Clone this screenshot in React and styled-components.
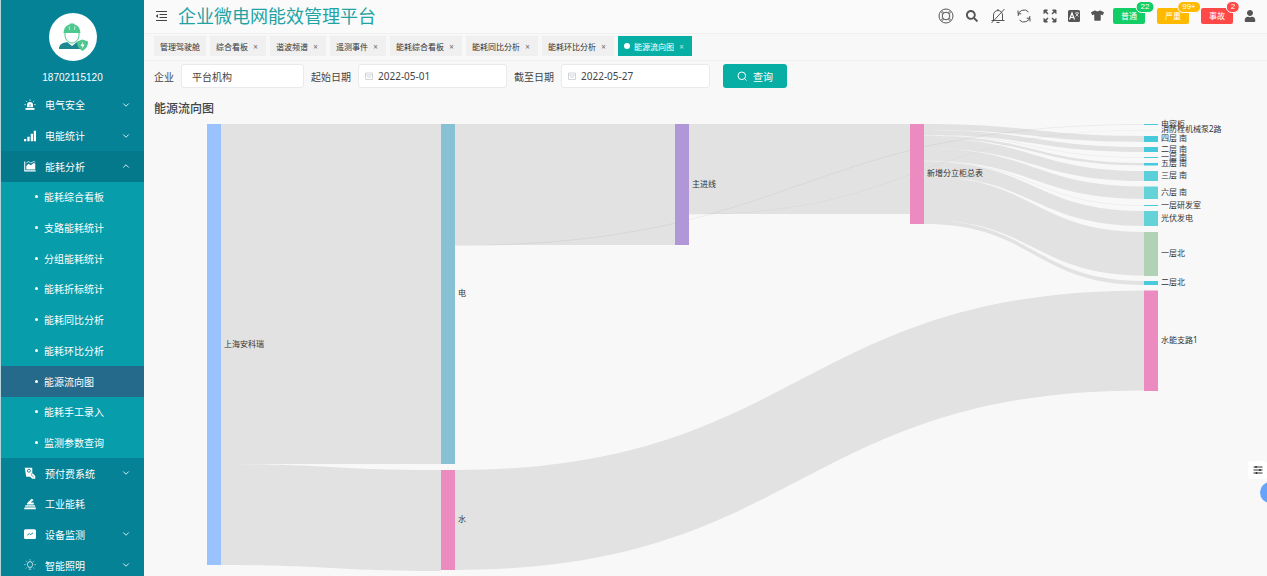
import React from 'react'
import styled, { createGlobalStyle } from 'styled-components'
import { FaSearch, FaTshirt, FaUser } from 'react-icons/fa'
import { ChevronDown, ChevronUp } from 'lucide-react'

const GlobalStyle = createGlobalStyle`
  * {
    box-sizing: border-box;
  }
  body {
    margin: 0;
    background: #f8f8f8;
    color: #444;
    font-family: 'Noto Sans', 'Noto Sans CJK SC', sans-serif;
    font-size: 10px;
  }
  button, input {
    font: inherit;
    color: inherit;
  }
`

/* ---------- data ---------- */

const menu = [
  { text: '电气安全', icon: 'alarm', arrow: 'down' },
  { text: '电能统计', icon: 'bars', arrow: 'down' },
  { text: '能耗分析', icon: 'area', arrow: 'up', open: true },
  { text: '能耗综合看板', sub: true },
  { text: '支路能耗统计', sub: true },
  { text: '分组能耗统计', sub: true },
  { text: '能耗折标统计', sub: true },
  { text: '能耗同比分析', sub: true },
  { text: '能耗环比分析', sub: true },
  { text: '能源流向图', sub: true, active: true },
  { text: '能耗手工录入', sub: true },
  { text: '监测参数查询', sub: true },
  { text: '预付费系统', icon: 'pay', arrow: 'down' },
  { text: '工业能耗', icon: 'factory' },
  { text: '设备监测', icon: 'monitor', arrow: 'down' },
  { text: '智能照明', icon: 'bulb', arrow: 'down' }
]

const tabs = [
  '管理驾驶舱', '综合看板', '谐波频谱', '遥测事件',
  '能耗综合看板', '能耗同比分析', '能耗环比分析', '能源流向图'
]

const alarms = [
  { text: '普通', count: '22', color: '#13ce66' },
  { text: '严重', count: '99+', color: '#ffba00' },
  { text: '事故', count: '2', color: '#ff4949' }
]

const columns = [63, 297, 531, 766, 1000]
const NODE_WIDTH = 14

const nodes = {
  root: { name: '上海安科瑞', col: 0, y: 6, h: 441, color: '#9ac2ff' },
  power: { name: '电', col: 1, y: 6, h: 340, color: '#88c1d4' },
  water: { name: '水', col: 1, y: 352, h: 100, color: '#ec8bc0' },
  main: { name: '主进线', col: 2, y: 6, h: 121, color: '#b098d8' },
  cabinet: { name: '新增分立柜总表', col: 3, y: 6, h: 100, color: '#ec8bc0' },
  capacitor: { name: '电容柜', col: 4, y: 6, h: 1, color: '#47cadb' },
  pump: { name: '消防栓机械泵2路', col: 4, y: 12, h: 0.3, color: '#c9edf1' },
  south4: { name: '四层 南', col: 4, y: 18, h: 6, color: '#47cadb' },
  south2: { name: '二层 南', col: 4, y: 29, h: 5, color: '#47cadb' },
  south1: { name: '一层 南', col: 4, y: 39, h: 1, color: '#47cadb' },
  south5: { name: '五层 南', col: 4, y: 45, h: 2.5, color: '#47cadb' },
  south3: { name: '三层 南', col: 4, y: 53, h: 10, color: '#5ad0da' },
  south6: { name: '六层 南', col: 4, y: 68.5, h: 12.5, color: '#63d3d8' },
  lab: { name: '一层研发室', col: 4, y: 87, h: 1, color: '#47cadb' },
  solar: { name: '光伏发电', col: 4, y: 93, h: 15, color: '#63d3d8' },
  north1: { name: '一层北', col: 4, y: 114, h: 44, color: '#b1d2b5' },
  north2: { name: '二层北', col: 4, y: 163, h: 4, color: '#47cadb' },
  waterBranch: { name: '水能支路1', col: 4, y: 172.5, h: 100.5, color: '#ec8bc0' }
}

const links = [
  ['root', 'power', 340],
  ['root', 'water', 101],
  ['power', 'main', 121],
  ['power', 'capacitor', 1],
  ['main', 'cabinet', 90],
  ['main', 'pump', 0.5],
  ['cabinet', 'south4', 6],
  ['cabinet', 'south2', 5],
  ['cabinet', 'south1', 0.8],
  ['cabinet', 'south5', 2.5],
  ['cabinet', 'south3', 10],
  ['cabinet', 'south6', 12.5],
  ['cabinet', 'lab', 0.8],
  ['cabinet', 'solar', 15],
  ['cabinet', 'north1', 43.5],
  ['cabinet', 'north2', 4],
  ['water', 'waterBranch', 100]
]

// stacks the links of each source from its top edge and returns the ribbons
const getRibbons = () => {
  const used = {}
  return links.map(([from, to, size]) => {
    const a = nodes[from]
    const b = nodes[to]
    const offset = used[from] || 0
    used[from] = offset + size
    const x1 = columns[a.col] + NODE_WIDTH
    const x2 = columns[b.col]
    const mid = (x1 + x2) / 2
    const y1 = a.y + offset
    const y2 = b.y
    return {
      id: `${from}-${to}`,
      thin: size <= 1,
      d: `M${x1} ${y1}C${mid} ${y1} ${mid} ${y2} ${x2} ${y2}V${y2 + size}` +
        `C${mid} ${y2 + size} ${mid} ${y1 + size} ${x1} ${y1 + size}Z`
    }
  })
}

/* ---------- icons ---------- */

const MenuIcon = ({ name }) => {
  const icons = {
    alarm: <>
      <path d='M4 11V8a4 4 0 0 1 8 0v3z' fill='currentColor' />
      <path d='M2 12h12v2.5H2z' fill='currentColor' />
      <path d='M8 .5v2M2.5 2.5l1.3 1.3M13.5 2.5l-1.3 1.3M.5 7.5h2M13.5 7.5h2' stroke='currentColor' />
      <path d='M8 7v3' stroke='#068297' />
    </>,
    bars: <path d='M0 12h3v3H0zM4.500 9h3v6h-3zM9 5h3v10H9zM13 1h3v14h-3z' fill='currentColor' />,
    area: <>
      <path d='M1 2v12.500h14.500' fill='none' stroke='currentColor' strokeWidth='1.400' />
      <path d='M3 12.500V8l3-3 3 2 4-3 2 1v7.500z' fill='currentColor' />
      <path d='M3 4l3-2 3 2 4-2 2 1' fill='none' stroke='currentColor' />
    </>,
    pay: <>
      <path d='M1 1h10v7l4 4v3.500h-4L8 13H3z' fill='currentColor' />
      <circle cx='6.500' cy='5' r='2' fill='none' stroke='#068297' strokeWidth='1.200' />
      <path d='M11 8l-1.500 2.500 3.500 3' fill='none' stroke='#068297' strokeWidth='.8' />
    </>,
    factory: <>
      <path d='M4 7l6-6 3 1.500L8.500 6H13v2.500H4z' fill='currentColor' />
      <path d='M2 9.500h12.500l1.500 5.500H0z' fill='currentColor' />
      <path d='M1 12h14' stroke='#068297' />
    </>,
    monitor: <>
      <rect x='0' y='1.500' width='16' height='13' rx='2' fill='currentColor' />
      <path d='M4.500 9.500l2.500-2 1.500 1.500L12 6.500' fill='none' stroke='#068297' strokeWidth='1.300' />
    </>,
    bulb: <>
      <path d='M6 11c0-1-1.500-2-1.500-4a3.500 3.500 0 0 1 7 0c0 2-1.500 3-1.500 4zM6.500 13.500h3' fill='none' stroke='currentColor' />
      <path d='M8 .5v1.500M2.500 2.500l1 1M13.500 2.500l-1 1M.5 7.500H2M14 7.500h1.500M2.500 12.500l1-1M13.500 12.500l-1-1' stroke='currentColor' />
    </>
  }
  return <svg width='12' height='12' viewBox='0 0 16 16'>{icons[name]}</svg>
}

const Avatar = () => (
  <svg width='30' height='28' viewBox='0 0 30 28'>
    <path d='M1 26c0-5 4-6 8-7l5 4 5-4c2 0 4 1 5 2v5z' fill='#1d8792' />
    <path d='M7 9v3c0 4 3 8 7 8s7-4 7-8V9z' fill='#fff' stroke='#4dc88e' />
    <path d='M5.500 10C6 4 9 2 11.500 1.500L12 .5h4l.5 1C19 2 22 4 22.500 10z' fill='#4dc88e' />
    <path d='M11 3l.5 4M17 3l-.5 4' stroke='#fff' strokeWidth='.6' />
    <path d='M19 18.500l5.500-2 5.500 2c0 5-2 7-5.500 9.500-3.500-2.500-5.500-4.500-5.500-9.500z' fill='#4dc88e' />
    <path d='M25 18.500L22.500 23h2l-.5 3 2.500-4.500h-2z' fill='#fff' />
  </svg>
)

const FoldIcon = () => (
  <svg width='12' height='12' viewBox='0 0 12 12' fill='none' stroke='#444' strokeWidth='1.200'>
    <path d='M1 1.500h11M4.500 4.500H12M4.500 7.500H12M1 10.500h11' />
    <path d='M3 4L.8 6 3 8z' fill='#444' stroke='none' />
  </svg>
)

const RingIcon = () => (
  <svg width='16' height='16' viewBox='0 0 16 16' fill='none' stroke='currentColor'>
    <circle cx='8' cy='8' r='7' />
    <circle cx='8' cy='8' r='3.800' />
    <path d='M3 4.500l2.200 1M4.500 3l1 2.200M13 4.500l-2.200 1M11.500 3l-1 2.200M3 11.500l2.200-1M4.500 13l1-2.200M13 11.500l-2.200-1M11.500 13l-1-2.200' strokeWidth='.7' />
  </svg>
)

const BellOffIcon = () => (
  <svg width='16' height='16' viewBox='0 0 16 16' fill='none' stroke='currentColor'>
    <path d='M1.500 12.500h13M3.500 12.500V7a4.500 4.500 0 0 1 9 0v5.500M8 1v1.500M6.500 14.500h3M1.500 15L14.500 1' />
  </svg>
)

const RefreshIcon = () => (
  <svg width='14' height='14' viewBox='0 0 14 14' fill='none' stroke='currentColor'>
    <path d='M1 7a6 6 0 0 1 10.500-4M13 7a6 6 0 0 1-10.500 4' />
    <path d='M1 1.500v3.300h3.300M13 12.500V9.200H9.700' />
  </svg>
)

const ExpandIcon = () => (
  <svg width='14' height='14' viewBox='0 0 14 14' fill='currentColor' stroke='currentColor'>
    <path d='M1 1h3.500L1 4.500zM13 1v3.500L9.500 1zM1 13V9.500L4.500 13zM13 13H9.500L13 9.500z' />
    <path d='M2 2l3 3M12 2L9 5M2 12l3-3M12 12L9 9' strokeWidth='1.500' />
  </svg>
)

const LanguageIcon = () => (
  <svg width='14' height='14' viewBox='0 0 14 14'>
    <rect x='1' y='1' width='12' height='12' rx='1.500' fill='currentColor' />
    <path d='M2.500 10.500l2.500-6.500 2.500 6.500M3.500 8.500h3' fill='none' stroke='#fff' strokeWidth='1.200' />
    <path d='M8 4h4M10 3v1M11.500 4.500L8.500 7.500M8.800 4.800l2.700 2.700' stroke='#fff' strokeWidth='.7' />
  </svg>
)

const CalendarIcon = () => (
  <svg width='8' height='8' viewBox='0 0 8 8' fill='none' stroke='#c8cad0' strokeWidth='.8'>
    <path d='M.5 1h7v6.500h-7zM.5 3h7M2 5h4' />
  </svg>
)

const SlidersIcon = () => (
  <svg width='10' height='10' viewBox='0 0 10 10' stroke='#333' fill='#333'>
    <path d='M.5 2h9M.5 5h9M.5 8h9' />
    <path d='M3 1v2M7 4v2M3.500 7v2' strokeWidth='1.500' />
  </svg>
)

const QueryIcon = () => (
  <svg width='10' height='10' viewBox='0 0 10 10' fill='none' stroke='#fff'>
    <circle cx='4.800' cy='4.800' r='3.800' />
    <path d='M7.500 7.500l2 2' />
  </svg>
)

/* ---------- page parts ---------- */

const Sidebar = () => (
  <Side>
    <Profile>
      <Portrait><Avatar /></Portrait>
      <Phone>18702115120</Phone>
    </Profile>
    <Nav>
      {menu.map((item) => (
        <MenuItem key={item.text} href='#' $sub={item.sub} $open={item.open} $active={item.active}>
          {item.sub ? <Bullet /> : <MenuIcon name={item.icon} />}
          <MenuText>{item.text}</MenuText>
          {item.arrow === 'down' && <ChevronDown size={10} strokeWidth={2} />}
          {item.arrow === 'up' && <ChevronUp size={10} strokeWidth={2} />}
        </MenuItem>
      ))}
    </Nav>
  </Side>
)

const Header = () => (
  <TopBar>
    <IconButton type='button' aria-label='fold menu'><FoldIcon /></IconButton>
    <Title>企业微电网能效管理平台</Title>
    <Tools>
      <IconButton type='button' aria-label='help'><RingIcon /></IconButton>
      <IconButton type='button' aria-label='search'><FaSearch size={12} /></IconButton>
      <IconButton type='button' aria-label='mute'><BellOffIcon /></IconButton>
      <IconButton type='button' aria-label='refresh'><RefreshIcon /></IconButton>
      <IconButton type='button' aria-label='full screen'><ExpandIcon /></IconButton>
    </Tools>
    <Tools $tight>
      <IconButton type='button' aria-label='language'><LanguageIcon /></IconButton>
      <IconButton type='button' aria-label='theme'><FaTshirt size={13} /></IconButton>
    </Tools>
    <Alarms>
      {alarms.map((alarm) => (
        <AlarmButton key={alarm.text} type='button' $color={alarm.color}>
          {alarm.text}
          <Count $color={alarm.color}>{alarm.count}</Count>
        </AlarmButton>
      ))}
    </Alarms>
    <IconButton type='button' aria-label='user'><FaUser size={12} /></IconButton>
  </TopBar>
)

const Tabs = () => (
  <TabBar>
    {tabs.map((tab, index) => {
      const active = index === tabs.length - 1
      return (
        <Tab key={tab} type='button' $active={active}>
          {active && <Dot />}
          {tab}
          {index > 0 && <Close>×</Close>}
        </Tab>
      )
    })}
  </TabBar>
)

const Filters = () => (
  <FilterForm onSubmit={(e) => e.preventDefault()}>
    <Label htmlFor='company'>企业</Label>
    <Field $width='123px'>
      <input id='company' name='company' type='text' defaultValue='平台机构' />
    </Field>
    <Label htmlFor='start'>起始日期</Label>
    <Field $width='149px' $date>
      <CalendarIcon />
      <input id='start' name='start' type='text' defaultValue='2022-05-01' />
    </Field>
    <Label htmlFor='end'>截至日期</Label>
    <Field $width='149px' $date>
      <CalendarIcon />
      <input id='end' name='end' type='text' defaultValue='2022-05-27' />
    </Field>
    <QueryButton type='submit'><QueryIcon />查询</QueryButton>
  </FilterForm>
)

const Sankey = () => (
  <Chart viewBox='0 0 1123 458'>
    {getRibbons().map((ribbon) => (
      <path key={ribbon.id} className={ribbon.thin ? 'ribbon thin' : 'ribbon'} d={ribbon.d} />
    ))}
    {Object.values(nodes).map((node) => (
      <g key={node.name}>
        <rect x={columns[node.col]} y={node.y} width={NODE_WIDTH} height={node.h} fill={node.color} />
        <text x={columns[node.col] + NODE_WIDTH + 3} y={node.y + node.h / 2 + 2}>{node.name}</text>
      </g>
    ))}
  </Chart>
)

const App = () => (
  <>
    <GlobalStyle />
    <Layout>
      <Sidebar />
      <Main>
        <Header />
        <Tabs />
        <Filters />
        <ChartTitle>能源流向图</ChartTitle>
        <Sankey />
      </Main>
    </Layout>
    <Settings type='button' aria-label='settings'><SlidersIcon /></Settings>
    <Helper type='button' aria-label='assistant' />
  </>
)

/* ---------- styles ---------- */

const Layout = styled.div`
  display: grid;
  grid-template-columns: 144px minmax(0, 1fr);
  height: 100vh;
  overflow: hidden;
`

const Side = styled.aside`
  overflow: hidden;
  color: #fff;
  background: #068297;
  border-left: 1px solid #b5d5db;
`

const Profile = styled.div`
  display: flex;
  flex-direction: column;
  align-items: center;
  height: 90px;
  padding-top: 13px;
`

const Portrait = styled.div`
  display: flex;
  align-items: center;
  justify-content: center;
  width: 48px;
  height: 48px;
  border-radius: 50%;
  background: #fff;
`

const Phone = styled.div`
  margin-top: 10px;
  font-family: 'Liberation Sans', sans-serif;
  line-height: 14px;
`

const Nav = styled.nav`
  display: grid;
  grid-template-rows: repeat(16, 1fr);
  height: 491px;
`

const MenuItem = styled.a`
  display: flex;
  align-items: center;
  gap: ${({ $sub }) => ($sub ? '6px' : '9px')};
  padding: 0 13px 1px ${({ $sub }) => ($sub ? '34px' : '23px')};
  color: #fff;
  text-decoration: none;
  background: ${({ $sub, $open, $active }) => {
    if ($active) return '#256a8b'
    if ($sub) return '#089dab'
    return $open ? '#04798c' : 'transparent'
  }};
`

const MenuText = styled.span`
  flex: 1;
`

const Bullet = styled.i`
  width: 3px;
  height: 3px;
  border-radius: 50%;
  background: #fff;
`

const Main = styled.main`
  display: flex;
  flex-direction: column;
  min-width: 0;
`

const TopBar = styled.header`
  display: flex;
  align-items: center;
  height: 34px;
  padding: 0 9px 2px;
  background: #fafafb;
  border-bottom: 1px solid #eff0f2;
`

const IconButton = styled.button`
  display: flex;
  align-items: center;
  justify-content: center;
  width: 16px;
  height: 16px;
  padding: 0;
  border: none;
  color: #555;
  background: none;
  cursor: pointer;
`

const Title = styled.h1`
  flex: 1;
  margin: 0 0 0 9px;
  color: #1fa3a3;
  font-size: 18px;
  font-weight: 400;
  line-height: 30px;
  white-space: nowrap;
`

const Tools = styled.div`
  display: flex;
  gap: ${({ $tight }) => ($tight ? '7px' : '10px')};
  margin-right: 8px;
`

const Alarms = styled.div`
  display: flex;
  gap: 12px;
  margin-right: 9px;
`

const AlarmButton = styled.button`
  position: relative;
  width: 32px;
  height: 16px;
  padding: 0;
  border: none;
  border-radius: 2px;
  color: #fff;
  font-size: 8px;
  line-height: 16px;
  background: ${({ $color }) => $color};
`

const Count = styled.sup`
  position: absolute;
  top: -7px;
  left: 100%;
  height: 12px;
  padding: 0 4px;
  border: 1px solid #fff;
  border-radius: 6px;
  font-family: 'Liberation Sans', sans-serif;
  font-size: 8px;
  line-height: 10px;
  background: ${({ $color }) => $color};
  transform: translateX(-50%);
`

const TabBar = styled.div`
  display: flex;
  align-items: center;
  gap: 4px;
  height: 27px;
  padding: 0 10px 2px;
  border-bottom: 1px solid #eeeff1;
`

const Tab = styled.button`
  display: flex;
  align-items: center;
  height: 20px;
  padding: 0 6px;
  border: none;
  color: ${({ $active }) => ($active ? '#fff' : '#333')};
  font-size: 8px;
  white-space: nowrap;
  background: ${({ $active }) => ($active ? '#07aea4' : '#f0f0f0')};
`

const Dot = styled.i`
  width: 6px;
  height: 6px;
  margin-right: 4px;
  border-radius: 50%;
  background: #fff;
`

const Close = styled.span`
  width: 12px;
  padding-left: 3px;
  opacity: 0.7;
`

const FilterForm = styled.form`
  display: flex;
  align-items: center;
  gap: 7px;
  padding: 3px 10px 0;
`

const Label = styled.label`
  white-space: nowrap;
`

const Field = styled.div`
  display: flex;
  align-items: center;
  gap: 5px;
  width: ${({ $width }) => $width};
  height: 24px;
  padding: 0 ${({ $date }) => ($date ? '6px' : '10px')};
  border: 1px solid #e9eaee;
  border-radius: 3px;
  background: #fff;

  svg {
    flex: none;
  }
  input {
    width: 100%;
    min-width: 0;
    padding: 0;
    border: none;
    outline: none;
    background: none;
  }
`

const QueryButton = styled.button`
  display: flex;
  align-items: center;
  justify-content: center;
  gap: 6px;
  width: 64px;
  height: 24px;
  margin-left: 6px;
  padding: 0;
  border: none;
  border-radius: 3px;
  color: #fff;
  background: #07aea4;
`

const ChartTitle = styled.h2`
  margin: 12px 10px 0;
  font-size: 12px;
  font-weight: 500;
  line-height: 18px;
`

const Chart = styled.svg`
  display: block;
  width: 100%;

  .ribbon {
    fill: rgba(0, 0, 0, 0.085);
  }
  .thin {
    fill: rgba(0, 0, 0, 0.05);
  }
  text {
    fill: #333;
    font-size: 8px;
  }
`

const Settings = styled.button`
  position: fixed;
  right: 0;
  bottom: 97px;
  display: flex;
  align-items: center;
  justify-content: center;
  width: 19px;
  height: 18px;
  padding: 0;
  border: none;
  border-radius: 3px;
  background: #fff;
`

const Helper = styled.button`
  position: fixed;
  right: -14px;
  bottom: 73px;
  width: 21px;
  height: 21px;
  padding: 0;
  border: none;
  border-radius: 50%;
  background: #66a3fb;
`

export default App
